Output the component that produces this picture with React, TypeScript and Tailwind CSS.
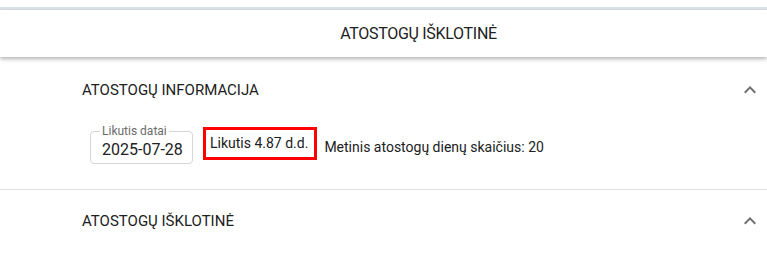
import React from "react";

function ExpandLess() {
  return (
    <svg viewBox="0 0 24 24" className="w-6 h-6 fill-[#6f6f6f]">
      <path d="M12 8l-6 6 1.41 1.41L12 10.83l4.59 4.58L18 14z" />
    </svg>
  );
}

function SectionHeader({ title, height }: { title: string; height: string }) {
  return (
    <div className={`flex items-center justify-between pl-[82px] pr-[5px] ${height}`}>
      <span className="text-[15px] text-[#212121] uppercase">{title}</span>
      <ExpandLess />
    </div>
  );
}

export default function App() {
  return (
    <div className="w-full bg-white font-['Roboto',sans-serif] text-[#212121]">
      {/* top strip */}
      <div className="h-[7px] bg-white" />
      <div className="h-[3px] bg-[#dbe2e9]" />

      {/* page header */}
      <div className="relative h-[47px] flex items-center justify-center pl-[70px] bg-white shadow-[0_2px_4px_rgba(0,0,0,0.3)]">
        <h1 className="text-[16px] tracking-[-0.3px]">ATOSTOGŲ IŠKLOTINĖ</h1>
      </div>

      {/* info section */}
      <div className="border-b border-[#e0e0e0]">
        <SectionHeader title="Atostogų informacija" height="h-[66px]" />
        <div className="flex items-start pl-[90px] pt-[4px] pb-[25px]">
          <div className="relative mt-[4px] h-[33px] w-[103px] rounded-[4px] border border-[#d6d6d6] pl-[11px] flex items-end pb-[4px]">
            <span className="absolute left-[9px] top-[-8px] bg-white px-[2px] text-[12px] leading-[14px] text-[#6b6b6b]">
              Likutis datai
            </span>
            <span className="text-[16px] leading-[19px]">2025-07-28</span>
          </div>
          <div className="ml-[10px] h-[33px] border-[3px] border-[#ff0000] pl-[4px] pr-[6px] flex items-center">
            <span className="text-[14px]">Likutis 4.87 d.d.</span>
          </div>
          <span className="ml-[7px] mt-[10px] text-[14px] leading-[20px]">
            Metinis atostogų dienų skaičius: 20
          </span>
        </div>
      </div>

      {/* second section */}
      <SectionHeader title="Atostogų išklotinė" height="h-[62px]" />
    </div>
  );
}
